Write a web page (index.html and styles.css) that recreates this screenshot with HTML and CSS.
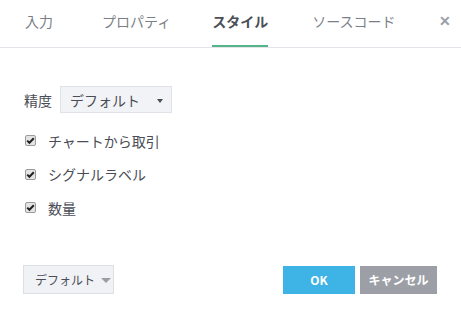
FILE: index.html
```html
<!DOCTYPE html>
<html>
	<head>
		<title>スタイル</title>
		<link rel="stylesheet" href="styles.css">
	</head>
	<body>
		<div class="dialog">
			<div class="tabs">
				<span class="tab first">入力</span>
				<span class="tab second">プロパティ</span>
				<span class="tab active">スタイル</span>
				<span class="tab">ソースコード</span>
				<span class="close">&#10005;</span>
			</div>
			<div class="content">
				<div class="row">
					<span class="label">精度</span>
					<div class="select">デフォルト<span class="caret"></span></div>
				</div>
				<label class="check"><span class="box"><svg viewBox="0 0 11 11" width="11" height="11"><path d="M2.2 5.6 L4.4 7.8 L8.8 3.2" fill="none" stroke="#222" stroke-width="2"/></svg></span>チャートから取引</label>
				<label class="check"><span class="box"><svg viewBox="0 0 11 11" width="11" height="11"><path d="M2.2 5.6 L4.4 7.8 L8.8 3.2" fill="none" stroke="#222" stroke-width="2"/></svg></span>シグナルラベル</label>
				<label class="check"><span class="box"><svg viewBox="0 0 11 11" width="11" height="11"><path d="M2.2 5.6 L4.4 7.8 L8.8 3.2" fill="none" stroke="#222" stroke-width="2"/></svg></span>数量</label>
			</div>
			<div class="footer">
				<div class="preset">デフォルト<span class="caret light"></span></div>
				<div class="buttons">
					<button class="btn ok">OK</button>
					<button class="btn cancel">キャンセル</button>
				</div>
			</div>
		</div>
	</body>
</html>
```
FILE: styles.css
```css
body {
	margin: 0;
	background: #fff;
	font-family: "Noto Sans CJK JP", "Noto Sans", sans-serif;
	color: #4a4d55;
}
.dialog {
	width: 461px;
	height: 317px;
	display: flex;
	flex-direction: column;
}
.tabs {
	display: flex;
	align-items: stretch;
	height: 48px;
	border-bottom: 1px solid #e1e4e8;
	padding-left: 25px;
	box-sizing: border-box;
	font-size: 14px;
	white-space: nowrap;
}
.tab {
	display: flex;
	align-items: center;
	flex: none;
	margin-right: 44px;
	color: #7b7f87;
	border-bottom: 2px solid transparent;
	padding-bottom: 3px;
}
.tab.first {
	margin-right: 49px;
}
.tab.second {
	margin-right: 41px;
}
.tab.active {
	color: #4a4e57;
	font-weight: bold;
	border-bottom-color: #55b488;
}
.close {
	margin-left: auto;
	margin-right: 25px;
	display: flex;
	align-items: center;
	color: #9a9ea6;
	font-size: 14px;
	font-weight: bold;
	padding-bottom: 8px;
}
.content {
	padding: 38px 24px 0;
	font-size: 14px;
	flex: 1;
}
.row {
	display: flex;
	align-items: center;
	margin-bottom: 11px;
}
.label {
	margin-right: 8px;
}
.select {
	display: flex;
	align-items: center;
	width: 112px;
	height: 27px;
	box-sizing: border-box;
	padding-left: 9px;
	background: #f2f3f6;
	border: 1px solid #dfe2e7;
	color: #4a4d55;
	white-space: nowrap;
}
.caret {
	margin-left: auto;
	margin-right: 8px;
	width: 0;
	height: 0;
	border-left: 3.5px solid transparent;
	border-right: 3.5px solid transparent;
	border-top: 4px solid #4a4d55;
	margin-top: 2px;
}
.caret.light {
	border-left-width: 5px;
	border-right-width: 5px;
	border-top: 5px solid #9a9da4;
	margin-right: 8px;
	margin-left: 6px;
}
.check {
	display: flex;
	align-items: center;
	height: 33.5px;
}
.box {
	position: relative;
	width: 11px;
	height: 11px;
	box-sizing: border-box;
	border: 1px solid #9b9b9b;
	border-radius: 2px;
	background: #e4e4e4;
	margin: 0 12px 0 1px;
}
.box svg {
	position: absolute;
	left: -1px;
	top: -1px;
}
.footer {
	display: flex;
	align-items: center;
	justify-content: space-between;
	padding: 0 24px 23px 23px;
}
.preset {
	display: flex;
	align-items: center;
	height: 29px;
	box-sizing: border-box;
	padding-left: 11px;
	background: #f1f2f6;
	border: 1px solid #dcdfe4;
	font-size: 12px;
	color: #4a4d55;
	width: 91px;
	white-space: nowrap;
}
.buttons {
	display: flex;
	gap: 5px;
}
.btn {
	height: 28px;
	border: none;
	color: #fff;
	font-family: "Noto Sans CJK JP", "Noto Sans", sans-serif;
	font-weight: bold;
	font-size: 12px;
	padding: 0;
}
.ok {
	background: #3db4e5;
	width: 72px;
}
.cancel {
	background: #9c9fa6;
	width: 77px;
}
```
